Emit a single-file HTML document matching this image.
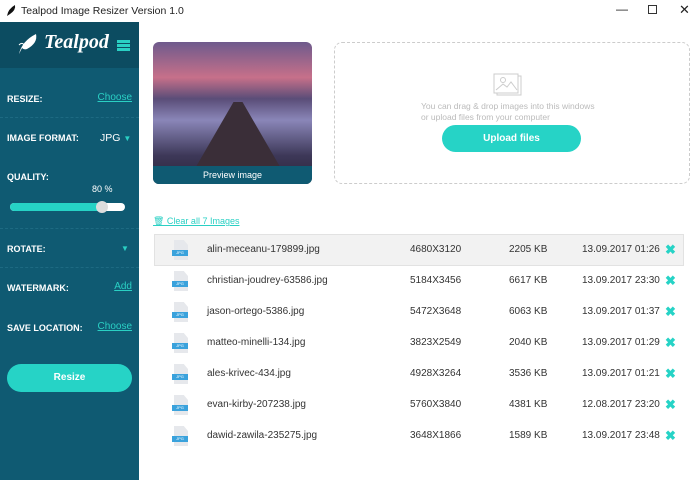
<!DOCTYPE html>
<html><head><meta charset="utf-8"><style>
*{margin:0;padding:0;box-sizing:border-box}
body{width:700px;height:480px;overflow:hidden;background:#fff;font-family:"Liberation Sans",sans-serif;position:relative;font-size:11px;color:#333}
.a{position:absolute}
.tb{top:0;left:0;width:700px;height:22px;background:#fff;font-size:10.5px;color:#222}
.side{top:22px;left:0;width:139px;height:458px;background:#0f5a72}
.hdr{top:22px;left:0;width:139px;height:46px;background:#0c4c61}
.lbl{color:#fff;font-weight:bold;font-size:9px;left:7px}
.lnk{color:#2ad0c4;text-decoration:underline;font-size:10px;right:568px}
.sep{left:0;width:139px;border-top:1px dashed #1d6a82}
.row{left:154px;width:530px;height:31px}
.row span{position:absolute;top:9px;font-size:10px;color:#333}
</style></head><body>
<div class="a tb"><svg class="a" style="left:5px;top:4px" width="12" height="13"><path d="M2 12 Q3 5 10 1 Q11 6 5 10Z" fill="#111"/></svg><span class="a" style="left:21px;top:5px">Tealpod Image Resizer Version 1.0</span>
<span class="a" style="left:616px;top:2px;font-size:12px">—</span><span class="a" style="left:648px;top:5px;width:9px;height:9px;border:1px solid #333"></span><span class="a" style="left:679px;top:2px;font-size:13px">✕</span></div>
<div class="a side"></div><div class="a hdr"></div>
<svg class="a" style="left:16px;top:32px" width="22" height="24"><path d="M3 22 Q6 9 20 2 Q22 11 11 17 Q8 18 6 16Z" fill="#fff"/><path d="M3 13 Q7 9 9 15" stroke="#fff" fill="none"/></svg>
<div class="a" style="left:44px;top:31px;color:#fff;font-family:'Liberation Serif',serif;font-style:italic;font-weight:bold;font-size:20px">Tealpod</div>
<div class="a" style="left:117px;top:40px;width:13px;height:3px;background:#2ad0c4;box-shadow:0 4px 0 #2ad0c4,0 8px 0 #2ad0c4"></div>
<div class="a lbl" style="top:94px">RESIZE:</div><div class="a lnk" style="top:92px">Choose</div>
<div class="a sep" style="top:117px"></div>
<div class="a lbl" style="top:133px">IMAGE FORMAT:</div><div class="a" style="left:100px;top:132px;color:#fff;font-size:10.5px">JPG <span style="color:#2ad0c4;font-size:8px">▼</span></div>
<div class="a lbl" style="top:172px">QUALITY:</div><div class="a" style="left:92px;top:184px;color:#fff;font-size:9px">80 %</div>
<div class="a" style="left:10px;top:203px;width:115px;height:8px;border-radius:4px;background:#fff"></div>
<div class="a" style="left:10px;top:203px;width:92px;height:8px;border-radius:4px;background:#26d3c6"></div>
<div class="a" style="left:96px;top:201px;width:12px;height:12px;border-radius:6px;background:#ddd"></div>
<div class="a sep" style="top:228px"></div>
<div class="a lbl" style="top:244px">ROTATE:</div><div class="a" style="left:121px;top:244px;color:#2ad0c4;font-size:8px">▼</div>
<div class="a sep" style="top:267px"></div>
<div class="a lbl" style="top:283px">WATERMARK:</div><div class="a lnk" style="top:281px">Add</div>
<div class="a lbl" style="top:323px">SAVE LOCATION:</div><div class="a lnk" style="top:321px">Choose</div>
<div class="a" style="left:7px;top:364px;width:125px;height:28px;border-radius:14px;background:#26d3c6;color:#fff;font-weight:bold;text-align:center;line-height:28px;font-size:10px">Resize</div>
<div class="a" style="left:153px;top:42px;width:159px;height:142px;border-radius:6px;overflow:hidden;background:linear-gradient(#6e5a8c 0%,#c7708a 25%,#5a4d78 40%,#8a86b8 55%,#3d3858 80%,#2a2438 100%)">
<div class="a" style="left:40px;top:60px;width:90px;height:70px;background:#3a2e38;clip-path:polygon(45% 0,55% 0,100% 100%,0 100%)"></div>
<div class="a" style="left:0;top:124px;width:159px;height:18px;background:#0f5a72;color:#fff;font-size:9px;text-align:center;line-height:18px">Preview image</div></div>
<div class="a" style="left:334px;top:42px;width:356px;height:142px;border:1px dashed #ccc;border-radius:8px"></div>
<svg class="a" style="left:493px;top:73px" width="30" height="24"><rect x="4" y="3" width="24" height="19" fill="none" stroke="#ccc"/><rect x="1" y="1" width="24" height="19" fill="#fff" stroke="#ccc"/><circle cx="10" cy="7" r="2.5" fill="none" stroke="#ccc"/><path d="M3 17 L10 11 L14 14 L18 9 L24 17" fill="none" stroke="#ccc"/></svg>
<div class="a" style="left:421px;top:101px;color:#bbb;font-size:8.5px;line-height:11px">You can drag &amp; drop images into this windows<br>or upload files from your computer</div>
<div class="a" style="left:442px;top:125px;width:139px;height:27px;border-radius:14px;background:#26d3c6;color:#fff;font-weight:bold;text-align:center;line-height:27px;font-size:10px">Upload files</div>
<div class="a" style="left:153px;top:216px;color:#2ad0c4;font-size:9px;text-decoration:underline">🗑 Clear all 7 Images</div>
<div class="a" style="left:154px;top:234px;width:530px;height:32px;background:#f2f2f2;border:1px solid #e2e2e2"></div>
<div id="rows"></div>
<script>
var d=[["alin-meceanu-179899.jpg","4680X3120","2205 KB","13.09.2017 01:26"],["christian-joudrey-63586.jpg","5184X3456","6617 KB","13.09.2017 23:30"],["jason-ortego-5386.jpg","5472X3648","6063 KB","13.09.2017 01:37"],["matteo-minelli-134.jpg","3823X2549","2040 KB","13.09.2017 01:29"],["ales-krivec-434.jpg","4928X3264","3536 KB","13.09.2017 01:21"],["evan-kirby-207238.jpg","5760X3840","4381 KB","12.08.2017 23:20"],["dawid-zawila-235275.jpg","3648X1866","1589 KB","13.09.2017 23:48"]];
var h="";d.forEach(function(r,i){var t=235+i*31;h+='<div class="a row" style="top:'+t+'px"><div class="a" style="left:20px;top:5px;width:14px;height:20px;background:#e6e8ec;clip-path:polygon(0 0,70% 0,100% 25%,100% 100%,0 100%)"></div><div class="a" style="left:18px;top:15px;width:16px;height:6px;background:#3aa2dc;color:#fff;font-size:4px;text-align:center;line-height:6px">JPG</div><span style="left:53px">'+r[0]+'</span><span style="left:256px">'+r[1]+'</span><span style="left:355px">'+r[2]+'</span><span style="left:428px">'+r[3]+'</span><span style="left:511px;top:7px;color:#26d3c6;font-weight:bold;font-size:13px">✖</span></div>'});
document.getElementById("rows").innerHTML=h;
</script>
</body></html>
